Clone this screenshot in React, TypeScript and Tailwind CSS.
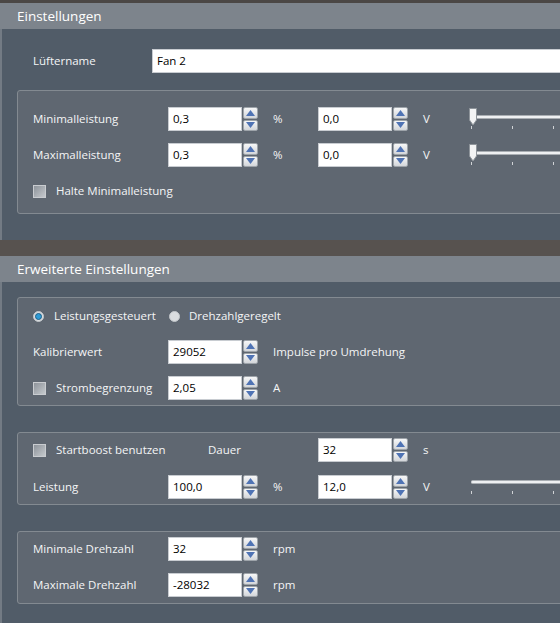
import React from 'react';

const SpinBtn = ({ up }: { up?: boolean }) => (
  <div className="flex-1 flex items-center justify-center rounded-[2px] border border-[#9ea4aa] bg-gradient-to-b from-[#f6f7f8] to-[#d3d6da]">
    <svg width="9" height="6" viewBox="0 0 9 6">
      {up ? <path d="M4.5 0 L9 6 L0 6 Z" fill="#4f73b4" /> : <path d="M0 0 L9 0 L4.5 6 Z" fill="#4f73b4" />}
    </svg>
  </div>
);

const Spin = ({ value }: { value: string }) => (
  <div className="flex h-[24px] w-[90px] shrink-0">
    <div className="w-[75px] bg-white border border-[#c8ccd1] flex items-center pl-[4px] text-black">
      {value}
    </div>
    <div className="flex flex-col w-[15px] ml-[1px] gap-[1px]">
      <SpinBtn up />
      <SpinBtn />
    </div>
  </div>
);

const Checkbox = () => (
  <div className="w-[13px] h-[13px] border border-[#c9ccd0] bg-gradient-to-br from-[#8d939a] to-[#c5c9cd] shrink-0" />
);

const Radio = ({ on }: { on?: boolean }) => (
  <div className="w-[11px] h-[11px] rounded-full border border-[#c2c6ca] bg-[#d9dcdf] flex items-center justify-center shrink-0">
    {on && <div className="w-[7px] h-[7px] rounded-full bg-[#2e9bd6] border border-[#1c5f87]" />}
  </div>
);

const Slider = ({ thumb }: { thumb?: boolean }) => (
  <div className="relative w-[100px] h-[24px] shrink-0">
    {thumb ? (
      <div className="absolute left-[8px] right-0 top-[8px] h-[4px] bg-[#eef0f2] border-y border-[#a9aeb3]" />
    ) : (
      <div className="absolute left-[3px] right-0 top-[5px] h-[4px] bg-[#eef0f2] border-y border-[#a9aeb3] rounded-l-[2px]" />
    )}
    {thumb && (
      <svg className="absolute left-0 top-[1px]" width="10" height="18" viewBox="0 0 10 18">
        <path d="M1.5 0.5 H8.5 V12 L5 17 L1.5 12 Z" fill="#f2f3f4" stroke="#8f959b" />
      </svg>
    )}
    <div className={`absolute left-[3px] w-[1px] h-[3px] bg-[#d0d3d6] ${thumb ? 'top-[19px]' : 'top-[16px]'}`} />
    <div className={`absolute left-[44px] w-[1px] h-[3px] bg-[#d0d3d6] ${thumb ? 'top-[19px]' : 'top-[16px]'}`} />
    <div className={`absolute left-[85px] w-[1px] h-[3px] bg-[#d0d3d6] ${thumb ? 'top-[19px]' : 'top-[16px]'}`} />
  </div>
);

const Header = ({ title }: { title: string }) => (
  <div className="h-[26px] bg-[#7d848c] flex items-center pl-[17px] text-[13.5px] text-white">{title}</div>
);

const Group = ({ className, children }: { className: string; children: React.ReactNode }) => (
  <div className={`ml-[15px] w-[700px] rounded-[3px] border border-[#838a91] bg-[#5f6771] flex flex-col ${className}`}>
    {children}
  </div>
);

const Row = ({ children }: { children: React.ReactNode }) => (
  <div className="flex items-center h-[24px] pl-[15px]">{children}</div>
);

const Label = ({ text }: { text: string }) => <div className="w-[135px] shrink-0">{text}</div>;

const Unit = ({ text }: { text: string }) => <div className="w-[60px] pl-[15px] shrink-0">{text}</div>;

export default function App() {
  return (
    <div className="w-[560px] h-[623px] overflow-hidden bg-[#57524f] text-[11.5px] text-[#f4f5f6] font-['Segoe_UI','Open_Sans',sans-serif]">
      <div className="h-[3px] bg-[#4b4745]" />

      {/* Einstellungen */}
      <div className="w-[700px]">
        <Header title="Einstellungen" />
        <div className="h-[211px] bg-[#515c68] border-l-2 border-[#737b84] flex flex-col pt-[20px]">
          <div className="flex items-center h-[24px] pl-[31px]">
            <div className="w-[119px]">Lüftername</div>
            <div className="flex-1 h-[24px] bg-white border border-[#c8ccd1] flex items-center pl-[4px] text-black">Fan 2</div>
          </div>
          <Group className="mt-[17px] h-[124px] pt-[16px] gap-[12px]">
            <Row>
              <Label text="Minimalleistung" />
              <Spin value="0,3" />
              <Unit text="%" />
              <Spin value="0,0" />
              <Unit text="V" />
              <Slider thumb />
            </Row>
            <Row>
              <Label text="Maximalleistung" />
              <Spin value="0,3" />
              <Unit text="%" />
              <Spin value="0,0" />
              <Unit text="V" />
              <Slider thumb />
            </Row>
            <Row>
              <Checkbox />
              <div className="pl-[10px]">Halte Minimalleistung</div>
            </Row>
          </Group>
        </div>
      </div>

      <div className="h-[16px]" />

      {/* Erweiterte Einstellungen */}
      <div className="w-[700px]">
        <Header title="Erweiterte Einstellungen" />
        <div className="h-[400px] bg-[#515c68] border-l-2 border-[#737b84] flex flex-col pt-[15px]">
          <Group className="h-[109px] pt-[6px] gap-[12px]">
            <Row>
              <Radio on />
              <div className="pl-[10px] w-[125px]">Leistungsgesteuert</div>
              <Radio />
              <div className="pl-[9px]">Drehzahlgeregelt</div>
            </Row>
            <Row>
              <Label text="Kalibrierwert" />
              <Spin value="29052" />
              <div className="pl-[15px]">Impulse pro Umdrehung</div>
            </Row>
            <Row>
              <Checkbox />
              <div className="pl-[10px] w-[122px]">Strombegrenzung</div>
              <Spin value="2,05" />
              <Unit text="A" />
            </Row>
          </Group>

          <Group className="mt-[26px] h-[73px] pt-[5px] gap-[13px]">
            <Row>
              <Checkbox />
              <div className="pl-[10px] w-[162px]">Startboost benutzen</div>
              <div className="w-[110px]">Dauer</div>
              <Spin value="32" />
              <Unit text="s" />
            </Row>
            <Row>
              <Label text="Leistung" />
              <Spin value="100,0" />
              <Unit text="%" />
              <Spin value="12,0" />
              <Unit text="V" />
              <Slider />
            </Row>
          </Group>

          <Group className="mt-[26px] h-[73px] pt-[5px] gap-[12px]">
            <Row>
              <Label text="Minimale Drehzahl" />
              <Spin value="32" />
              <Unit text="rpm" />
            </Row>
            <Row>
              <Label text="Maximale Drehzahl" />
              <Spin value="-28032" />
              <Unit text="rpm" />
            </Row>
          </Group>
        </div>
      </div>
    </div>
  );
}
